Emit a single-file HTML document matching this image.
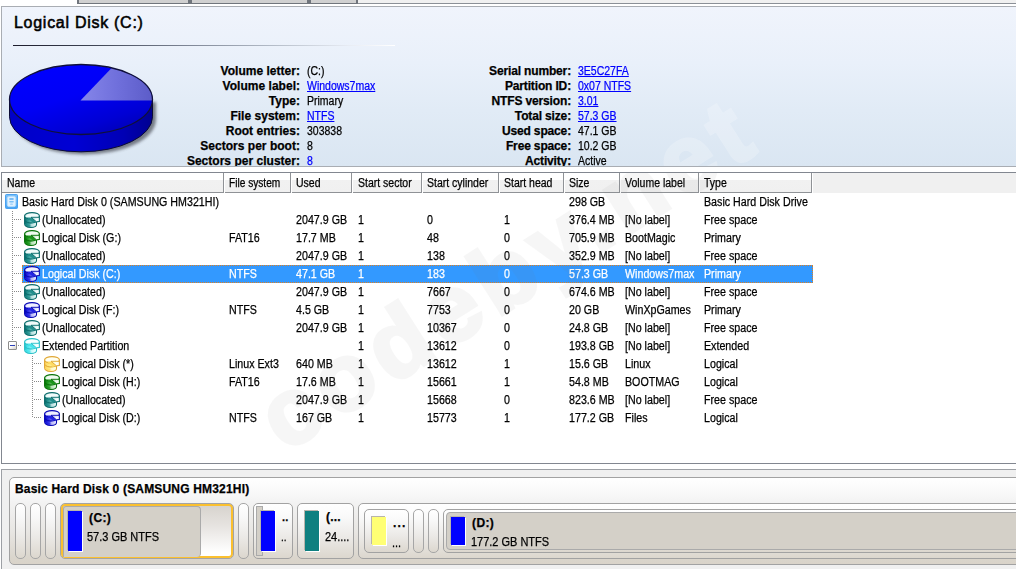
<!DOCTYPE html>
<html lang="en"><head><meta charset="utf-8"><title>Logical Disk (C:)</title>
<style>
html,body{margin:0;padding:0;}
body{width:1016px;height:569px;overflow:hidden;position:relative;background:#fff;font-family:"Liberation Sans",sans-serif;font-size:12px;color:#000;letter-spacing:0;-webkit-text-stroke:0.25px;}
div,span,svg{position:absolute;white-space:nowrap;}
/* top strip */
#tabs{left:77px;top:0;width:281px;height:3px;background:#d0d0d0;border-bottom:1px solid #70757c;}
#tabs i{position:absolute;top:0;width:2px;height:4px;background:#70757c;}
#tabr{left:358px;top:0;width:658px;height:3px;background:#f0f0f0;border-bottom:1px solid #8b9097;}
/* info panel */
#info{left:1px;top:6px;width:1020px;height:159px;border:1px solid #a9adb3;background:linear-gradient(#f0f4fc 0%,#e9f0fa 35%,#e1ebf6 65%,#dae6f2 100%);overflow:hidden;}
#title{left:12px;top:6px;font-size:16px;font-weight:normal;-webkit-text-stroke:0.55px #000;letter-spacing:0.72px;line-height:20px;}
#rule{left:11px;top:38px;width:382px;height:1px;background:linear-gradient(90deg,#1c1c2c 0%,#3c4252 20%,#7c8494 45%,#b4bcc8 68%,#e8ecf4 88%,#ffffff 100%);}
.lb{font-weight:bold;text-align:right;line-height:15px;letter-spacing:0.02px;}
.vl{line-height:15px;transform:scaleX(0.875);transform-origin:0 50%;}
.vl a{color:#0000ff;text-decoration:underline;}
/* list */
#list{left:1px;top:172px;width:1020px;height:290px;border:1px solid #828790;background:#fff;overflow:hidden;}
#hdr{left:0;top:0;width:1020px;height:20px;background:#f0f0f0;}
.hc{top:0;height:19px;border-right:1px solid #8f9296;border-bottom:1px solid #8f9296;background:linear-gradient(#fff 0,#fff 7px,#f1f1f1 7px,#f0f0f0 19px);box-shadow:1px 0 0 #fff,1px 1px 0 #fff;}
.hc span{top:0;line-height:20px;transform:scaleX(0.875);transform-origin:0 50%;}
.row{left:0;width:1014px;height:18px;}
.c{top:0;line-height:18px;margin-left:-0.4px;transform:scaleX(0.89);transform-origin:0 50%;}
.sel .c{color:#fff;}
.selbg{left:20px;top:0;width:789px;height:16px;background:#3399ff;border:1px dotted #e08020;}
.ic{overflow:visible;}
/* bottom */
#bot{left:1px;top:469px;width:1020px;height:110px;border:1px solid #9da0a5;background:#f0f0f0;overflow:hidden;}
.wm{font-size:94px;font-weight:bold;letter-spacing:8px;transform:translate(-50%,-50%) rotate(-32.5deg);pointer-events:none;line-height:100px;z-index:5;}
#wm1{left:506px;top:266px;color:#fff;-webkit-text-stroke:4px #fff;opacity:0.22;}
#wm2{left:506px;top:100px;color:#787878;-webkit-text-stroke:4px #787878;opacity:0.06;}
.dv{width:1px;background:repeating-linear-gradient(to bottom,#8a8a8a 0,#8a8a8a 1px,transparent 1px,transparent 2px);}
.dh{height:1px;background:repeating-linear-gradient(to right,#8a8a8a 0,#8a8a8a 1px,transparent 1px,transparent 2px);}
.exp{width:7px;height:7px;border:1px solid #8e8e8e;border-radius:1px;background:linear-gradient(135deg,#fff 0%,#fff 40%,#d6d2cc 100%);}
.exp i{position:absolute;left:1px;top:3px;width:5px;height:1px;background:#2b3fb8;}
#disk{left:7px;top:7px;width:1020px;height:86px;border:1px solid #a2a2a2;border-radius:5px;background:linear-gradient(#ffffff 0%,#fafafa 14%,#f3f3f3 28%,#e8e6e3 62%,#dad5cc 93%,#d9d3c9 100%);}
.pill{box-sizing:border-box;border:1px solid #a6a6a6;border-radius:5px;background:linear-gradient(#ffffff 0%,#f8f8f8 25%,#ebe9e6 62%,#dcd7ce 100%);}
.blk{box-sizing:border-box;border:1px solid #a2a2a2;border-radius:5px;background:linear-gradient(#ffffff 0%,#f9f9f9 25%,#ebe9e6 62%,#dcd7ce 100%);}
.selc{border:1px solid #a4a4a4;box-shadow:inset 0 0 0 2px #fbc02f;border-radius:5px;background:linear-gradient(#d6d2cc 0%,#e6e3e0 40%,#ffffff 90%);}
.used{box-sizing:border-box;border:1px solid #aaa;border-radius:4px;background:#d4d0c8;}
.bar{box-shadow:1px 1px 0 #fff,-1px -1px 0 #b8b4ac;}
.bt{line-height:14px;margin-left:-1px;transform:scaleX(0.915);transform-origin:0 50%;}
.b{font-weight:bold;letter-spacing:0.18px;transform:none;margin-left:0;}

</style></head><body>

<svg width="0" height="0" style="position:absolute"><defs>
<linearGradient id="g-teal" x1="0" y1="0" x2="1" y2="0"><stop offset="0" stop-color="#0a6a6a"/><stop offset="0.2" stop-color="#23908e"/><stop offset="0.62" stop-color="#8ad2d0"/><stop offset="0.85" stop-color="#f0fbfb"/><stop offset="1" stop-color="#8ad2d0"/></linearGradient>
<linearGradient id="t-teal" x1="0" y1="0" x2="1" y2="0.5"><stop offset="0" stop-color="#23908e"/><stop offset="0.3" stop-color="#f0fbfb"/><stop offset="1" stop-color="#f0fbfb"/></linearGradient>
<linearGradient id="w-teal" x1="0" y1="0" x2="1" y2="1"><stop offset="0" stop-color="#8ad2d0"/><stop offset="0.55" stop-color="#f0fbfb"/><stop offset="1" stop-color="#ffffff"/></linearGradient>
<symbol id="d-teal" viewBox="0 0 16 16" overflow="visible"><path d="M0.6 4 L0.6 11.6 C0.6 14.4 4 15.5 6.8 15.5 C9.6 15.5 12.5 14.6 12.5 12.6 L12.5 9.7 L15.4 9.5 L15.4 4 Z" fill="url(#g-teal)" stroke="#0a6a6a" stroke-width="1.1" stroke-linejoin="round"/><path d="M0.8 8.4 C1.8 10.6 5 11.2 8.6 10.9 L12.3 10" fill="none" stroke="#0a6a6a" stroke-width="1"/><path d="M1 12 C2.4 13.6 5 14 7.6 13.8" fill="none" stroke="#23908e" stroke-width="0.8"/><path d="M6.5 12 L12 11 L12 13 C11.4 14.4 9 14.9 6.5 14.8 Z" fill="#ffffff" opacity="0.55"/><ellipse cx="8" cy="3.9" rx="7.4" ry="3.3" fill="url(#t-teal)" stroke="#0a6a6a" stroke-width="1.1"/><path d="M2.6 5.6 L7 5.4 L12.4 9.8 L9 10.7 Z" fill="#23908e"/><path d="M7 5.3 L15.3 5.3 L15.3 9.5 L12.4 9.7 Z" fill="url(#w-teal)" stroke="#0a6a6a" stroke-width="0.9" stroke-linejoin="round"/></symbol>
<linearGradient id="g-green" x1="0" y1="0" x2="1" y2="0"><stop offset="0" stop-color="#067006"/><stop offset="0.2" stop-color="#1c961c"/><stop offset="0.62" stop-color="#8ad28a"/><stop offset="0.85" stop-color="#f0fbf0"/><stop offset="1" stop-color="#8ad28a"/></linearGradient>
<linearGradient id="t-green" x1="0" y1="0" x2="1" y2="0.5"><stop offset="0" stop-color="#1c961c"/><stop offset="0.3" stop-color="#f0fbf0"/><stop offset="1" stop-color="#f0fbf0"/></linearGradient>
<linearGradient id="w-green" x1="0" y1="0" x2="1" y2="1"><stop offset="0" stop-color="#8ad28a"/><stop offset="0.55" stop-color="#f0fbf0"/><stop offset="1" stop-color="#ffffff"/></linearGradient>
<symbol id="d-green" viewBox="0 0 16 16" overflow="visible"><path d="M0.6 4 L0.6 11.6 C0.6 14.4 4 15.5 6.8 15.5 C9.6 15.5 12.5 14.6 12.5 12.6 L12.5 9.7 L15.4 9.5 L15.4 4 Z" fill="url(#g-green)" stroke="#067006" stroke-width="1.1" stroke-linejoin="round"/><path d="M0.8 8.4 C1.8 10.6 5 11.2 8.6 10.9 L12.3 10" fill="none" stroke="#067006" stroke-width="1"/><path d="M1 12 C2.4 13.6 5 14 7.6 13.8" fill="none" stroke="#1c961c" stroke-width="0.8"/><path d="M6.5 12 L12 11 L12 13 C11.4 14.4 9 14.9 6.5 14.8 Z" fill="#ffffff" opacity="0.55"/><ellipse cx="8" cy="3.9" rx="7.4" ry="3.3" fill="url(#t-green)" stroke="#067006" stroke-width="1.1"/><path d="M2.6 5.6 L7 5.4 L12.4 9.8 L9 10.7 Z" fill="#1c961c"/><path d="M7 5.3 L15.3 5.3 L15.3 9.5 L12.4 9.7 Z" fill="url(#w-green)" stroke="#067006" stroke-width="0.9" stroke-linejoin="round"/></symbol>
<linearGradient id="g-blue" x1="0" y1="0" x2="1" y2="0"><stop offset="0" stop-color="#0606b4"/><stop offset="0.2" stop-color="#2424e4"/><stop offset="0.62" stop-color="#9090f4"/><stop offset="0.85" stop-color="#f0f0ff"/><stop offset="1" stop-color="#9090f4"/></linearGradient>
<linearGradient id="t-blue" x1="0" y1="0" x2="1" y2="0.5"><stop offset="0" stop-color="#2424e4"/><stop offset="0.3" stop-color="#f0f0ff"/><stop offset="1" stop-color="#f0f0ff"/></linearGradient>
<linearGradient id="w-blue" x1="0" y1="0" x2="1" y2="1"><stop offset="0" stop-color="#9090f4"/><stop offset="0.55" stop-color="#f0f0ff"/><stop offset="1" stop-color="#ffffff"/></linearGradient>
<symbol id="d-blue" viewBox="0 0 16 16" overflow="visible"><path d="M0.6 4 L0.6 11.6 C0.6 14.4 4 15.5 6.8 15.5 C9.6 15.5 12.5 14.6 12.5 12.6 L12.5 9.7 L15.4 9.5 L15.4 4 Z" fill="url(#g-blue)" stroke="#0606b4" stroke-width="1.1" stroke-linejoin="round"/><path d="M0.8 8.4 C1.8 10.6 5 11.2 8.6 10.9 L12.3 10" fill="none" stroke="#0606b4" stroke-width="1"/><path d="M1 12 C2.4 13.6 5 14 7.6 13.8" fill="none" stroke="#2424e4" stroke-width="0.8"/><path d="M6.5 12 L12 11 L12 13 C11.4 14.4 9 14.9 6.5 14.8 Z" fill="#ffffff" opacity="0.55"/><ellipse cx="8" cy="3.9" rx="7.4" ry="3.3" fill="url(#t-blue)" stroke="#0606b4" stroke-width="1.1"/><path d="M2.6 5.6 L7 5.4 L12.4 9.8 L9 10.7 Z" fill="#2424e4"/><path d="M7 5.3 L15.3 5.3 L15.3 9.5 L12.4 9.7 Z" fill="url(#w-blue)" stroke="#0606b4" stroke-width="0.9" stroke-linejoin="round"/></symbol>
<linearGradient id="g-cyan" x1="0" y1="0" x2="1" y2="0"><stop offset="0" stop-color="#28c0c8"/><stop offset="0.2" stop-color="#48e4ec"/><stop offset="0.62" stop-color="#b0fafa"/><stop offset="0.85" stop-color="#f6ffff"/><stop offset="1" stop-color="#b0fafa"/></linearGradient>
<linearGradient id="t-cyan" x1="0" y1="0" x2="1" y2="0.5"><stop offset="0" stop-color="#48e4ec"/><stop offset="0.3" stop-color="#f6ffff"/><stop offset="1" stop-color="#f6ffff"/></linearGradient>
<linearGradient id="w-cyan" x1="0" y1="0" x2="1" y2="1"><stop offset="0" stop-color="#b0fafa"/><stop offset="0.55" stop-color="#f6ffff"/><stop offset="1" stop-color="#ffffff"/></linearGradient>
<symbol id="d-cyan" viewBox="0 0 16 16" overflow="visible"><path d="M0.6 4 L0.6 11.6 C0.6 14.4 4 15.5 6.8 15.5 C9.6 15.5 12.5 14.6 12.5 12.6 L12.5 9.7 L15.4 9.5 L15.4 4 Z" fill="url(#g-cyan)" stroke="#28c0c8" stroke-width="1.1" stroke-linejoin="round"/><path d="M0.8 8.4 C1.8 10.6 5 11.2 8.6 10.9 L12.3 10" fill="none" stroke="#28c0c8" stroke-width="1"/><path d="M1 12 C2.4 13.6 5 14 7.6 13.8" fill="none" stroke="#48e4ec" stroke-width="0.8"/><path d="M6.5 12 L12 11 L12 13 C11.4 14.4 9 14.9 6.5 14.8 Z" fill="#ffffff" opacity="0.55"/><ellipse cx="8" cy="3.9" rx="7.4" ry="3.3" fill="url(#t-cyan)" stroke="#28c0c8" stroke-width="1.1"/><path d="M2.6 5.6 L7 5.4 L12.4 9.8 L9 10.7 Z" fill="#48e4ec"/><path d="M7 5.3 L15.3 5.3 L15.3 9.5 L12.4 9.7 Z" fill="url(#w-cyan)" stroke="#28c0c8" stroke-width="0.9" stroke-linejoin="round"/></symbol>
<linearGradient id="g-yellow" x1="0" y1="0" x2="1" y2="0"><stop offset="0" stop-color="#ffd458"/><stop offset="0.3" stop-color="#ffe880"/><stop offset="0.7" stop-color="#ffffac"/><stop offset="1" stop-color="#fff8a0"/></linearGradient>
<linearGradient id="t-yellow" x1="0" y1="0" x2="1" y2="0.5"><stop offset="0" stop-color="#ffdc64"/><stop offset="0.3" stop-color="#fffff2"/><stop offset="1" stop-color="#fffff2"/></linearGradient>
<linearGradient id="w-yellow" x1="0" y1="0" x2="1" y2="1"><stop offset="0" stop-color="#ffffa4"/><stop offset="0.55" stop-color="#fffff2"/><stop offset="1" stop-color="#ffffff"/></linearGradient>
<symbol id="d-yellow" viewBox="0 0 16 16" overflow="visible"><path d="M0.6 4 L0.6 11.6 C0.6 14.4 4 15.5 6.8 15.5 C9.6 15.5 12.5 14.6 12.5 12.6 L12.5 9.7 L15.4 9.5 L15.4 4 Z" fill="url(#g-yellow)" stroke="#e0a634" stroke-width="1.1" stroke-linejoin="round"/><path d="M0.8 8.4 C1.8 10.6 5 11.2 8.6 10.9 L12.3 10" fill="none" stroke="#e0a634" stroke-width="1"/><path d="M1 12 C2.4 13.6 5 14 7.6 13.8" fill="none" stroke="#ffdc64" stroke-width="0.8"/><path d="M6.5 12 L12 11 L12 13 C11.4 14.4 9 14.9 6.5 14.8 Z" fill="#ffffff" opacity="0.55"/><ellipse cx="8" cy="3.9" rx="7.4" ry="3.3" fill="url(#t-yellow)" stroke="#e0a634" stroke-width="1.1"/><path d="M2.6 5.6 L7 5.4 L12.4 9.8 L9 10.7 Z" fill="#ffdc64"/><path d="M7 5.3 L15.3 5.3 L15.3 9.5 L12.4 9.7 Z" fill="url(#w-yellow)" stroke="#e0a634" stroke-width="0.9" stroke-linejoin="round"/></symbol>
<linearGradient id="g-hdd" x1="0" y1="0" x2="0" y2="1"><stop offset="0" stop-color="#7cc0f8"/><stop offset="1" stop-color="#46a4f4"/></linearGradient>
<symbol id="hdd" viewBox="0 0 14 16"><rect x="0.5" y="0.5" width="13" height="15" rx="1" fill="url(#g-hdd)" stroke="#3c9af0"/><rect x="2.5" y="2.5" width="9" height="11" rx="2" fill="#e0f0fe" stroke="#b4dcfc"/><rect x="4.5" y="4.4" width="5" height="1.6" rx="0.8" fill="#58acf4"/><rect x="4.5" y="7.4" width="5" height="1.6" rx="0.8" fill="#7cc0f6"/><rect x="5.5" y="10.2" width="3" height="1.4" rx="0.7" fill="#98ccf8"/></symbol>
</defs></svg>
<div id="tabs"><i style="left:0"></i><i style="left:111px"></i><i style="left:113px"></i><i style="left:230px"></i><i style="left:232px"></i><i style="left:279px"></i></div>
<div id="tabr"></div>
<div id="info">
<div id="title">Logical Disk (C:)</div>
<div id="rule"></div>
<svg id="pie" style="left:-2px;top:48px" width="175" height="110" viewBox="0 55 175 110">
<defs>
<linearGradient id="pg" x1="0.15" y1="0" x2="0.8" y2="1"><stop offset="0" stop-color="#0000ff"/><stop offset="0.45" stop-color="#0000f6"/><stop offset="0.8" stop-color="#0000d4"/><stop offset="1" stop-color="#0000b4"/></linearGradient>
<linearGradient id="ps" x1="0" y1="0" x2="1" y2="0"><stop offset="0" stop-color="#0000c8"/><stop offset="0.45" stop-color="#0000d4"/><stop offset="0.8" stop-color="#0000b4"/><stop offset="1" stop-color="#000090"/></linearGradient>
<linearGradient id="pw" x1="0" y1="0" x2="1" y2="0"><stop offset="0" stop-color="#8686ea"/><stop offset="0.5" stop-color="#7070dc"/><stop offset="1" stop-color="#5c5cc8"/></linearGradient>
<filter id="bl" x="-20%" y="-20%" width="140%" height="140%"><feGaussianBlur stdDeviation="1.5"/></filter>
</defs>
<path d="M13 104 L13 119.5 A71.5 35 0 0 0 156 119.5 L156 102 Z" fill="#30343c" opacity="0.6" filter="url(#bl)"/>
<path d="M9.5 99.5 L9.5 116.8 A71.5 35 0 0 0 152.5 116.8 L152.5 99.5 Z" fill="url(#ps)" stroke="#0c0c34" stroke-width="1"/>
<ellipse cx="81" cy="99.5" rx="71.5" ry="35" fill="url(#pg)"/>
<path d="M80.5 100.6 L152.4 100.6 A71.5 35 0 0 0 111.6 67.9 Z" fill="url(#pw)"/>
<ellipse cx="81" cy="99.5" rx="71.5" ry="35" fill="none" stroke="#10103a" stroke-width="1.3"/>
</svg>
<div class="lb" style="right:722px;top:57px">Volume letter:</div>
<div class="vl" style="left:305px;top:57px">(C:)</div>
<div class="lb" style="right:722px;top:72px">Volume label:</div>
<div class="vl" style="left:305px;top:72px"><a>Windows7max</a></div>
<div class="lb" style="right:722px;top:87px">Type:</div>
<div class="vl" style="left:305px;top:87px">Primary</div>
<div class="lb" style="right:722px;top:102px">File system:</div>
<div class="vl" style="left:305px;top:102px"><a>NTFS</a></div>
<div class="lb" style="right:722px;top:117px">Root entries:</div>
<div class="vl" style="left:305px;top:117px">303838</div>
<div class="lb" style="right:722px;top:132px">Sectors per boot:</div>
<div class="vl" style="left:305px;top:132px">8</div>
<div class="lb" style="right:722px;top:147px">Sectors per cluster:</div>
<div class="vl" style="left:305px;top:147px"><a>8</a></div>
<div class="lb" style="letter-spacing:-0.15px;right:451px;top:57px">Serial number:</div>
<div class="vl" style="left:576px;top:57px"><a>3E5C27FA</a></div>
<div class="lb" style="letter-spacing:-0.15px;right:451px;top:72px">Partition ID:</div>
<div class="vl" style="left:576px;top:72px"><a>0x07 NTFS</a></div>
<div class="lb" style="letter-spacing:-0.15px;right:451px;top:87px">NTFS version:</div>
<div class="vl" style="left:576px;top:87px"><a>3.01</a></div>
<div class="lb" style="letter-spacing:-0.15px;right:451px;top:102px">Total size:</div>
<div class="vl" style="left:576px;top:102px"><a>57.3 GB</a></div>
<div class="lb" style="letter-spacing:-0.15px;right:451px;top:117px">Used space:</div>
<div class="vl" style="left:576px;top:117px">47.1 GB</div>
<div class="lb" style="letter-spacing:-0.15px;right:451px;top:132px">Free space:</div>
<div class="vl" style="left:576px;top:132px">10.2 GB</div>
<div class="lb" style="letter-spacing:-0.15px;right:451px;top:147px">Activity:</div>
<div class="vl" style="left:576px;top:147px">Active</div>
<div class="wm" id="wm1">codeby.net</div>
</div>

<div id="list">
<div id="hdr">
<div class="hc" style="left:0px;width:221px"><span style="left:5px">Name</span></div>
<div class="hc" style="left:223px;width:65px"><span style="left:4px;transform:scaleX(0.845)">File system</span></div>
<div class="hc" style="left:290px;width:59px"><span style="left:4px">Used</span></div>
<div class="hc" style="left:351px;width:68px"><span style="left:5px">Start sector</span></div>
<div class="hc" style="left:421px;width:75px"><span style="left:4px">Start cylinder</span></div>
<div class="hc" style="left:498px;width:63px"><span style="left:4px">Start head</span></div>
<div class="hc" style="left:563px;width:54px"><span style="left:4px">Size</span></div>
<div class="hc" style="left:619px;width:77px"><span style="left:4px">Volume label</span></div>
<div class="hc" style="left:698px;width:111px"><span style="left:4px">Type</span></div>
</div>
<div class="dv" style="left:10px;top:38px;height:135px"></div>
<div class="dh" style="left:12px;top:46px;width:8px"></div>
<div class="dh" style="left:12px;top:64px;width:8px"></div>
<div class="dh" style="left:12px;top:82px;width:8px"></div>
<div class="dh" style="left:12px;top:100px;width:8px"></div>
<div class="dh" style="left:12px;top:118px;width:8px"></div>
<div class="dh" style="left:12px;top:136px;width:8px"></div>
<div class="dh" style="left:12px;top:154px;width:8px"></div>
<div class="dh" style="left:16px;top:172px;width:4px"></div>
<div class="dv" style="left:30px;top:183px;height:62px"></div>
<div class="dh" style="left:32px;top:190px;width:8px"></div>
<div class="dh" style="left:32px;top:208px;width:8px"></div>
<div class="dh" style="left:32px;top:226px;width:8px"></div>
<div class="dh" style="left:32px;top:244px;width:8px"></div>
<div class="exp" style="left:6px;top:168px"><i></i></div>

<div class="row" style="top:20px">
<svg class="ic" style="left:3px;top:1px" width="13" height="15"><use href="#hdd"/></svg>
<span class="c" style="left:20px">Basic Hard Disk 0 (SAMSUNG HM321HI)</span>
<span class="c" style="left:567px">298 GB</span>
<span class="c" style="left:702px">Basic Hard Disk Drive</span>
</div>
<div class="row" style="top:38px">
<svg class="ic" style="left:22px;top:1px" width="16" height="16"><use href="#d-teal"/></svg>
<span class="c" style="left:40px">(Unallocated)</span>
<span class="c" style="left:294px">2047.9 GB</span>
<span class="c" style="left:356px">1</span>
<span class="c" style="left:425px">0</span>
<span class="c" style="left:502px">1</span>
<span class="c" style="left:567px">376.4 MB</span>
<span class="c" style="left:623px">[No label]</span>
<span class="c" style="left:702px">Free space</span>
</div>
<div class="row" style="top:56px">
<svg class="ic" style="left:22px;top:1px" width="16" height="16"><use href="#d-green"/></svg>
<span class="c" style="left:40px">Logical Disk (G:)</span>
<span class="c" style="left:227px">FAT16</span>
<span class="c" style="left:294px">17.7 MB</span>
<span class="c" style="left:356px">1</span>
<span class="c" style="left:425px">48</span>
<span class="c" style="left:502px">0</span>
<span class="c" style="left:567px">705.9 MB</span>
<span class="c" style="left:623px">BootMagic</span>
<span class="c" style="left:702px">Primary</span>
</div>
<div class="row" style="top:74px">
<svg class="ic" style="left:22px;top:1px" width="16" height="16"><use href="#d-teal"/></svg>
<span class="c" style="left:40px">(Unallocated)</span>
<span class="c" style="left:294px">2047.9 GB</span>
<span class="c" style="left:356px">1</span>
<span class="c" style="left:425px">138</span>
<span class="c" style="left:502px">0</span>
<span class="c" style="left:567px">352.9 MB</span>
<span class="c" style="left:623px">[No label]</span>
<span class="c" style="left:702px">Free space</span>
</div>
<div class="row sel" style="top:92px">
<div class="selbg"></div>
<svg class="ic" style="left:22px;top:1px" width="16" height="16"><use href="#d-blue"/></svg>
<span class="c" style="left:40px">Logical Disk (C:)</span>
<span class="c" style="left:227px">NTFS</span>
<span class="c" style="left:294px">47.1 GB</span>
<span class="c" style="left:356px">1</span>
<span class="c" style="left:425px">183</span>
<span class="c" style="left:502px">0</span>
<span class="c" style="left:567px">57.3 GB</span>
<span class="c" style="left:623px">Windows7max</span>
<span class="c" style="left:702px">Primary</span>
</div>
<div class="row" style="top:110px">
<svg class="ic" style="left:22px;top:1px" width="16" height="16"><use href="#d-teal"/></svg>
<span class="c" style="left:40px">(Unallocated)</span>
<span class="c" style="left:294px">2047.9 GB</span>
<span class="c" style="left:356px">1</span>
<span class="c" style="left:425px">7667</span>
<span class="c" style="left:502px">0</span>
<span class="c" style="left:567px">674.6 MB</span>
<span class="c" style="left:623px">[No label]</span>
<span class="c" style="left:702px">Free space</span>
</div>
<div class="row" style="top:128px">
<svg class="ic" style="left:22px;top:1px" width="16" height="16"><use href="#d-blue"/></svg>
<span class="c" style="left:40px">Logical Disk (F:)</span>
<span class="c" style="left:227px">NTFS</span>
<span class="c" style="left:294px">4.5 GB</span>
<span class="c" style="left:356px">1</span>
<span class="c" style="left:425px">7753</span>
<span class="c" style="left:502px">0</span>
<span class="c" style="left:567px">20 GB</span>
<span class="c" style="left:623px">WinXpGames</span>
<span class="c" style="left:702px">Primary</span>
</div>
<div class="row" style="top:146px">
<svg class="ic" style="left:22px;top:1px" width="16" height="16"><use href="#d-teal"/></svg>
<span class="c" style="left:40px">(Unallocated)</span>
<span class="c" style="left:294px">2047.9 GB</span>
<span class="c" style="left:356px">1</span>
<span class="c" style="left:425px">10367</span>
<span class="c" style="left:502px">0</span>
<span class="c" style="left:567px">24.8 GB</span>
<span class="c" style="left:623px">[No label]</span>
<span class="c" style="left:702px">Free space</span>
</div>
<div class="row" style="top:164px">
<svg class="ic" style="left:22px;top:1px" width="16" height="16"><use href="#d-cyan"/></svg>
<span class="c" style="left:40px">Extended Partition</span>
<span class="c" style="left:356px">1</span>
<span class="c" style="left:425px">13612</span>
<span class="c" style="left:502px">0</span>
<span class="c" style="left:567px">193.8 GB</span>
<span class="c" style="left:623px">[No label]</span>
<span class="c" style="left:702px">Extended</span>
</div>
<div class="row" style="top:182px">
<svg class="ic" style="left:42px;top:1px" width="16" height="16"><use href="#d-yellow"/></svg>
<span class="c" style="left:60px">Logical Disk (*)</span>
<span class="c" style="left:227px">Linux Ext3</span>
<span class="c" style="left:294px">640 MB</span>
<span class="c" style="left:356px">1</span>
<span class="c" style="left:425px">13612</span>
<span class="c" style="left:502px">1</span>
<span class="c" style="left:567px">15.6 GB</span>
<span class="c" style="left:623px">Linux</span>
<span class="c" style="left:702px">Logical</span>
</div>
<div class="row" style="top:200px">
<svg class="ic" style="left:42px;top:1px" width="16" height="16"><use href="#d-green"/></svg>
<span class="c" style="left:60px">Logical Disk (H:)</span>
<span class="c" style="left:227px">FAT16</span>
<span class="c" style="left:294px">17.6 MB</span>
<span class="c" style="left:356px">1</span>
<span class="c" style="left:425px">15661</span>
<span class="c" style="left:502px">1</span>
<span class="c" style="left:567px">54.8 MB</span>
<span class="c" style="left:623px">BOOTMAG</span>
<span class="c" style="left:702px">Logical</span>
</div>
<div class="row" style="top:218px">
<svg class="ic" style="left:42px;top:1px" width="16" height="16"><use href="#d-teal"/></svg>
<span class="c" style="left:60px">(Unallocated)</span>
<span class="c" style="left:294px">2047.9 GB</span>
<span class="c" style="left:356px">1</span>
<span class="c" style="left:425px">15668</span>
<span class="c" style="left:502px">0</span>
<span class="c" style="left:567px">823.6 MB</span>
<span class="c" style="left:623px">[No label]</span>
<span class="c" style="left:702px">Free space</span>
</div>
<div class="row" style="top:236px">
<svg class="ic" style="left:42px;top:1px" width="16" height="16"><use href="#d-blue"/></svg>
<span class="c" style="left:60px">Logical Disk (D:)</span>
<span class="c" style="left:227px">NTFS</span>
<span class="c" style="left:294px">167 GB</span>
<span class="c" style="left:356px">1</span>
<span class="c" style="left:425px">15773</span>
<span class="c" style="left:502px">1</span>
<span class="c" style="left:567px">177.2 GB</span>
<span class="c" style="left:623px">Files</span>
<span class="c" style="left:702px">Logical</span>
</div>
<div class="wm" id="wm2">codeby.net</div>
</div>
<div id="bot"><div id="disk">
<span class="bt b" style="left:5px;top:4px;">Basic Hard Disk 0 (SAMSUNG HM321HI)</span>
<div class="pill" style="left:5px;top:25px;width:11px;height:56px;"></div>
<div class="pill" style="left:20px;top:25px;width:11px;height:56px;"></div>
<div class="pill" style="left:35px;top:25px;width:11px;height:56px;"></div>
<div class="pill" style="left:228px;top:25px;width:11px;height:56px;"></div>
<div class="blk selc" style="left:50px;top:25px;width:174px;height:56px;"></div>
<div class="used" style="left:53px;top:28px;width:138px;height:51px;border-bottom:none;border-radius:3px 4px 4px 0"></div>
<div class="bar" style="left:58px;top:33px;width:14px;height:40px;background:#0000ff"></div>
<span class="bt b" style="left:79px;top:33px;letter-spacing:0.4px">(C:)</span>
<span class="bt" style="left:78px;top:52px;">57.3 GB NTFS</span>
<div class="blk" style="left:243px;top:25px;width:40px;height:56px;"></div>
<div class="used" style="left:246px;top:28px;width:7px;height:50px;border-radius:0"></div>
<div class="bar" style="left:251px;top:33px;width:14px;height:40px;background:#0000ff"></div>
<span class="bt b" style="left:272px;top:32px;font-size:11px">..</span>
<span class="bt" style="left:272px;top:52px;font-size:11px">..</span>
<div class="blk" style="left:287px;top:25px;width:57px;height:56px;"></div>
<div class="bar" style="left:295px;top:33px;width:14px;height:40px;background:#0f8080"></div>
<span class="bt b" style="left:316px;top:32px;">(...</span>
<span class="bt" style="left:316px;top:52px;">24....</span>
<div class="blk" style="left:348px;top:25px;width:673px;height:56px;"></div>
<div class="blk" style="left:354px;top:31px;width:45px;height:44px;"></div>
<div class="bar" style="left:362px;top:39px;width:14px;height:28px;background:#ffff74"></div>
<span class="bt b" style="left:383px;top:38px;letter-spacing:1.2px">...</span>
<span class="bt" style="left:383px;top:58px;">...</span>
<div class="pill" style="left:403px;top:31px;width:11px;height:44px;"></div>
<div class="pill" style="left:418px;top:31px;width:11px;height:44px;"></div>
<div class="blk" style="left:433px;top:31px;width:588px;height:44px;"></div>
<div class="used" style="left:436px;top:34px;width:585px;height:38px;"></div>
<div class="bar" style="left:441px;top:39px;width:14px;height:28px;background:#0000ff"></div>
<span class="bt b" style="left:462px;top:38px;letter-spacing:0.4px">(D:)</span>
<span class="bt" style="left:462px;top:57px;">177.2 GB NTFS</span>
</div></div>


</body></html>
